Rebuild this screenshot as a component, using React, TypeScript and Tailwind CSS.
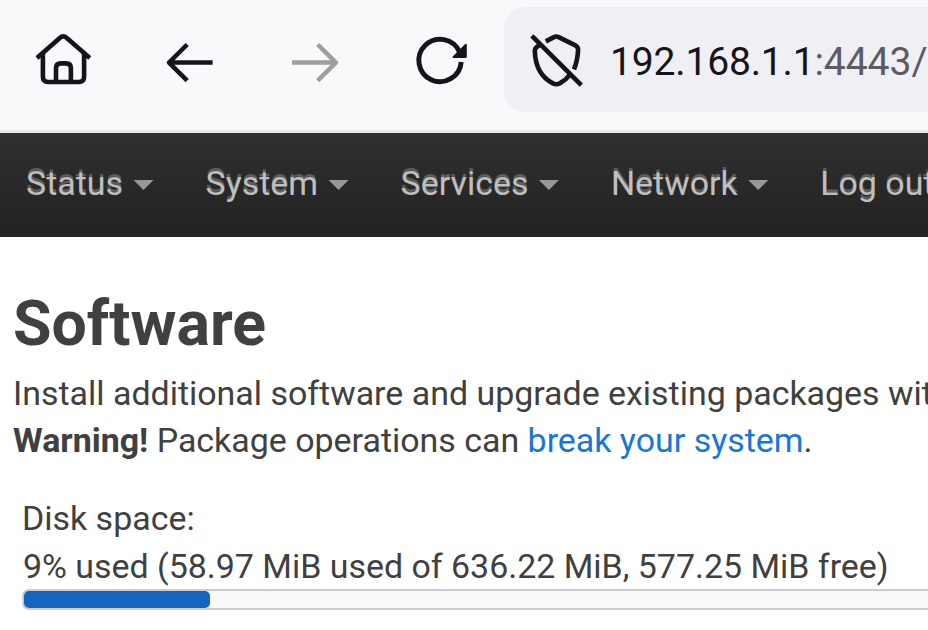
const menu = ['Status', 'System', 'Services', 'Network']

function HomeIcon() {
  return (
    <svg width="60" height="58" viewBox="33 30 60 58" fill="none" stroke="#15141a" strokeWidth="4.6">
      <path d="M37 57.9L59.8 38Q63.3 34.9 66.8 38L89.8 57.9" />
      <path d="M42.9 53V76.7Q42.9 82 48.2 82H78.8Q84.1 82 84.1 76.7V53" />
      <path d="M56 81V68.3Q56 63.4 60.9 63.4H66Q70.9 63.4 70.9 68.3V81" />
    </svg>
  )
}

function BackIcon() {
  return (
    <svg width="50" height="44" viewBox="165 40 50 44" fill="none" stroke="#15141a" strokeWidth="4.5" strokeLinejoin="round">
      <path d="M212.6 62.6H169M187.2 44.5L169 62.6L187.2 80.7" />
    </svg>
  )
}

function ForwardIcon() {
  return (
    <svg width="50" height="44" viewBox="290 40 50 44" fill="none" stroke="#9f9fa2" strokeWidth="4.5" strokeLinejoin="round">
      <path d="M292 62.6H335.7M317.7 44.5L335.9 62.6L317.7 80.7" />
    </svg>
  )
}

function ReloadIcon() {
  return (
    <svg width="56" height="56" viewBox="413 33 56 56" fill="none">
      <path d="M461.2 62A21.2 21.2 0 1 1 459.5 52" stroke="#15141a" strokeWidth="4.9" />
      <path d="M453 56.2L464.9 44.3Q466.8 43.1 466.8 45.2V56.4Q466.8 58.1 465.2 58.1H454Q451.7 57.7 453 56.2Z" fill="#15141a" />
    </svg>
  )
}

function ShieldOffIcon() {
  return (
    <svg width="56" height="58" viewBox="529 30 56 58" fill="none" stroke="#15141a" strokeWidth="4.6">
      <path d="M545.8 40.4L554 36.1Q556.3 34.9 558.6 36.1L575.4 44.4Q578.3 46 578.1 49C577.7 56 576.6 62 574 68.4" />
      <path d="M540.2 43.8L537 45.8Q534.6 47.4 534.8 50.4C535.3 63 539.2 75.5 553 82.4Q556.3 84 559.7 82.4Q565.5 79.4 570 73.6" />
      <path d="M531.9 34.9L581.3 84.2" />
    </svg>
  )
}

export default function App() {
  return (
    <div className="h-[630px] w-[928px] overflow-hidden bg-white font-[Roboto,sans-serif] text-[33.93px] leading-[47.25px] whitespace-nowrap text-[#404040]">
      {/* Browser toolbar */}
      <header className="flex h-[133px] items-start border-b-[3px] border-[#e9e9ed] bg-[#f9f9fb]">
        <div className="flex w-[504px] shrink-0 items-start pl-[33px]">
          <div className="pt-[30px]"><HomeIcon /></div>
          <div className="pt-10 pl-[72px]"><BackIcon /></div>
          <div className="pt-10 pl-[75px]"><ForwardIcon /></div>
          <div className="pt-[33px] pl-[73px]"><ReloadIcon /></div>
        </div>
        <div className="mt-[7px] flex h-[105px] w-[460px] shrink-0 items-center rounded-l-[21px] bg-[#f0eff4] pl-[25px] text-[39.1px]">
          <ShieldOffIcon />
          <span className="pt-[6px] pl-[25px] tracking-[-0.2px] text-[#15141a]">
            192.168.1.1<span className="text-[#5b5b66]">:<span className="tracking-normal">4443/</span></span>
          </span>
        </div>
      </header>

      {/* Main menu */}
      <nav className="flex h-[104px] items-center gap-[52px] bg-linear-to-b from-[#303030] to-[#222222] pl-[26px] text-[#bfbfbf] [text-shadow:0_-2.6px_0.5px_#5c5c5c]">
        {menu.map((item) => (
          <div key={item} className="flex items-center gap-[10.5px]">
            <span className="-mt-[3px]">{item}</span>
            <span className="h-[10px] w-5 bg-[#989898] [clip-path:polygon(0_0,100%_0,50%_100%)]" />
          </div>
        ))}
        <span className="-mt-[3px]">Log out</span>
      </nav>

      <main className="pt-[55px] pl-[13px]">
        <h1 className="text-[62.6px] leading-[63px] font-bold">Software</h1>
        <p className="mt-[15px]">
          Install additional software and upgrade existing packages with opkg.
          <br />
          <b>Warning!</b> Package operations can <a className="text-[#1976d2]">break your system</a>.
        </p>

        {/* Disk usage */}
        <div className="mt-[30px] pl-[9px]">
          <div>Disk space:</div>
          <div className="pt-[2px] pl-px leading-[45.25px]">9% used (58.97 MiB used of 636.22 MiB, 577.25 MiB free)</div>
          <div className="h-[21px] w-[960px] rounded-[7px] border-2 border-[#cccccc] bg-[#f9f9f9]">
            <div className="h-full w-[186px] rounded-[5px] bg-[#1565c0]" />
          </div>
        </div>
      </main>
    </div>
  )
}
